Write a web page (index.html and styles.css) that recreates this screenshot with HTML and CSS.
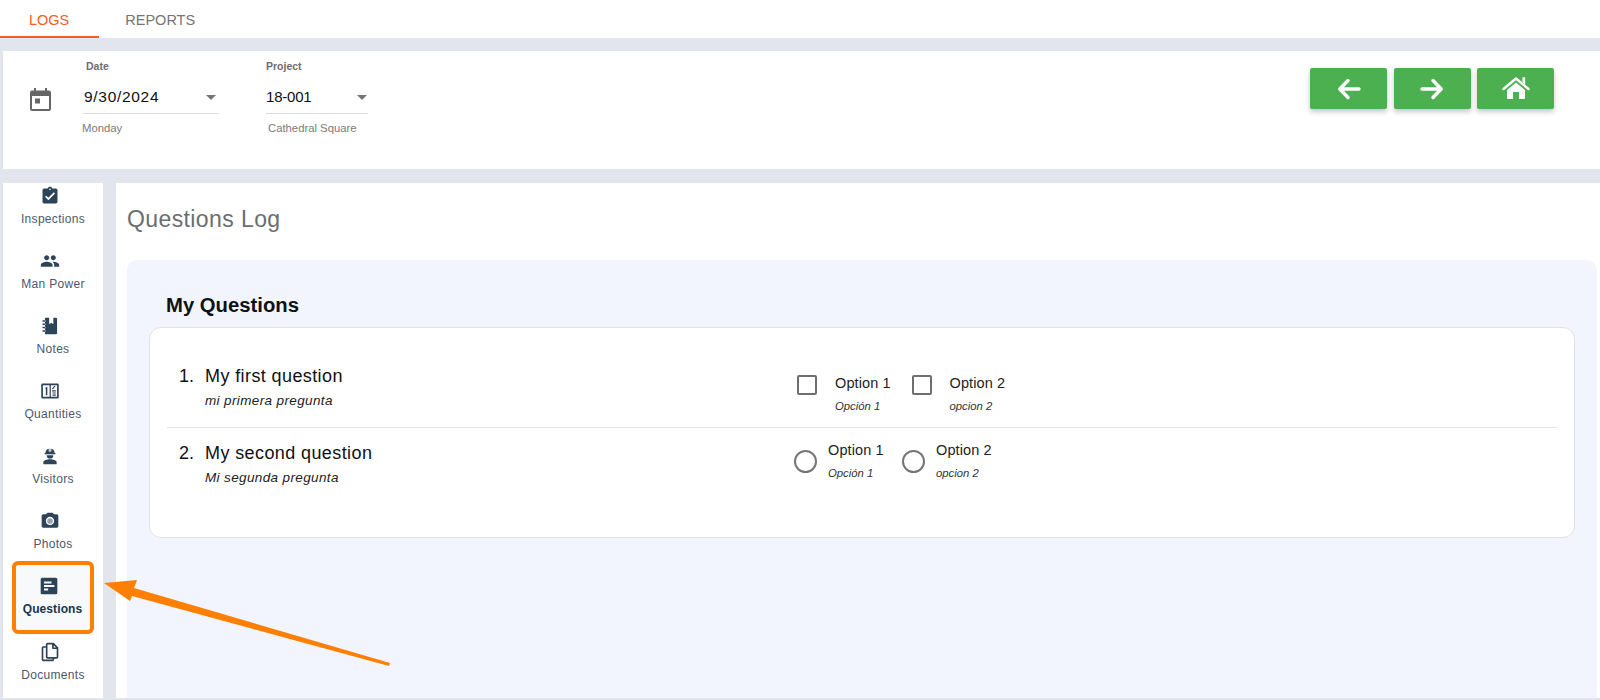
FILE: index.html
```html
<!DOCTYPE html>
<html lang="en">
<head>
<meta charset="utf-8">
<title>Questions Log</title>
<link rel="stylesheet" href="styles.css">
</head>
<body>
<nav class="tabs">
  <a class="tab tab-active">LOGS</a>
  <a class="tab">REPORTS</a>
</nav>
<header class="toolbar">
  <svg class="cal-icon" viewBox="0 0 21 23"><path fill="#666" fill-rule="evenodd" d="M4 0h2v2.500h9V0h2v2.500h2a2 2 0 0 1 2 2V21a2 2 0 0 1-2 2H2a2 2 0 0 1-2-2V4.500a2 2 0 0 1 2-2h2zM2 8v13h17V8zM5 10.500h5v5H5z"/></svg>
  <div class="field field-date">
    <div class="field-label">Date</div>
    <div class="field-value"><span>9/30/2024</span><i class="caret"></i></div>
    <div class="field-hint">Monday</div>
  </div>
  <div class="field field-project">
    <div class="field-label">Project</div>
    <div class="field-value"><span>18-001</span><i class="caret"></i></div>
    <div class="field-hint hint-indent">Cathedral Square</div>
  </div>
  <div class="actions">
    <button class="btn"><svg viewBox="0 0 24 24" class="btn-icon"><path d="M22 12H3M11 3.500 2.800 12l8.200 8.500" fill="none" stroke="#fff" stroke-width="3.400" stroke-linecap="round" stroke-linejoin="round"/></svg></button>
    <button class="btn"><svg viewBox="0 0 24 24" class="btn-icon"><path d="M2 12h19M13 3.500l8.200 8.500-8.200 8.500" fill="none" stroke="#fff" stroke-width="3.400" stroke-linecap="round" stroke-linejoin="round"/></svg></button>
    <button class="btn"><svg viewBox="0 0 28 24" class="btn-icon home-icon"><path fill="#fff" d="M14 7.500 5 15v8a1 1 0 0 0 1 1h5v-7h6v7h5a1 1 0 0 0 1-1v-8z"/><path fill="none" stroke="#fff" stroke-width="2.400" stroke-linecap="round" stroke-linejoin="round" d="M1.500 14 14 3.500 26.500 14"/><path fill="#fff" d="M20.500 2.300h2.700v7.200l-2.700-2.300z"/></svg></button>
  </div>
</header>
<div class="content">
  <aside class="sidebar">
    <div class="side-item side-first">
      <svg class="side-icon" viewBox="0 0 24 24"><path d="M19 3h-4.180C14.400 1.840 13.300 1 12 1c-1.300 0-2.400.84-2.820 2H5c-1.100 0-2 .9-2 2v14c0 1.100.9 2 2 2h14c1.100 0 2-.9 2-2V5c0-1.100-.9-2-2-2zm-7 0c.55 0 1 .45 1 1s-.45 1-1 1-1-.45-1-1 .45-1 1-1zm-2 14l-4-4 1.410-1.410L10 14.170l6.590-6.590L18 9l-8 8z"/></svg>
      <span>Inspections</span>
    </div>
    <div class="side-item">
      <svg class="side-icon" viewBox="0 0 24 24"><path d="M16 11c1.660 0 2.990-1.340 2.990-3S17.660 5 16 5c-1.660 0-3 1.340-3 3s1.340 3 3 3zm-8 0c1.660 0 2.990-1.340 2.990-3S9.660 5 8 5C6.340 5 5 6.340 5 8s1.340 3 3 3zm0 2c-2.330 0-7 1.170-7 3.500V19h14v-2.500c0-2.330-4.670-3.500-7-3.500zm8 0c-.29 0-.62.02-.97.05 1.160.84 1.970 1.970 1.970 3.450V19h6v-2.500c0-2.330-4.670-3.500-7-3.500z"/></svg>
      <span>Man Power</span>
    </div>
    <div class="side-item">
      <svg class="side-icon" viewBox="0 0 24 24"><path fill-rule="evenodd" d="M6 2h5v8l2.500-2 2.500 2V2h3a1.500 1.500 0 0 1 1.500 1.500v17A1.500 1.500 0 0 1 19 22H6zM3 5h3.500v1.800H3zM3 9h3.500v1.800H3zM3 13h3.500v1.800H3zM3 17h3.500v1.800H3z"/></svg>
      <span>Notes</span>
    </div>
    <div class="side-item">
      <svg class="side-icon" viewBox="0 0 24 24"><path fill-rule="evenodd" d="M3 3h18a1.500 1.500 0 0 1 1.500 1.500v15A1.500 1.500 0 0 1 21 21H3a1.500 1.500 0 0 1-1.500-1.500v-15A1.500 1.500 0 0 1 3 3zM3.500 5v14h8V5zM13 5v14h7.500V5zM6.500 8 8.800 6.800V17H7V9.200l-.5.300zM14.500 11h4.500v1.500h-4.500zM17.200 5.800l1.300.5-3 3.900-1.200-.5zM15 13.800h4v1.300h-4zM15 16.300h4v1.300h-4z"/></svg>
      <span>Quantities</span>
    </div>
    <div class="side-item">
      <svg class="side-icon" viewBox="0 0 24 24"><path d="M6.500 8.500a5.500 5.500 0 0 1 4-5.200V7h1.200V3h.6v4h1.200V3.300a5.500 5.500 0 0 1 4 5.200h1v1.300H5.500V8.500zM8 11h8a4 4 0 0 1-8 0zM12 16c3.500 0 8 1.500 8 3.600V22H4v-2.400C4 17.500 8.500 16 12 16z"/></svg>
      <span>Visitors</span>
    </div>
    <div class="side-item">
      <svg class="side-icon" viewBox="0 0 24 24"><path d="M9 2L7.170 4H4c-1.100 0-2 .9-2 2v12c0 1.100.9 2 2 2h16c1.100 0 2-.9 2-2V6c0-1.100-.9-2-2-2h-3.170L15 2H9zm3 15c-2.760 0-5-2.240-5-5s2.240-5 5-5 5 2.240 5 5-2.240 5-5 5z"/><circle cx="12" cy="12" r="3.400" fill="#9aa3ad"/></svg>
      <span>Photos</span>
    </div>
    <div class="side-item side-active">
      <svg class="side-icon" viewBox="0 0 24 24"><path fill-rule="evenodd" d="M4 2h16a2 2 0 0 1 2 2v16a2 2 0 0 1-2 2H4a2 2 0 0 1-2-2V4a2 2 0 0 1 2-2zM6 6.500v2.500h9V6.500zM6 10.800v2.400h12.500v-2.400zM6 15v2.500h5V15z"/></svg>
      <span>Questions</span>
    </div>
    <div class="side-item">
      <svg class="side-icon" viewBox="0 0 24 24"><path fill="none" stroke="#2d4358" stroke-width="2" stroke-linejoin="round" d="M9 2h7l5 5v11a1 1 0 0 1-1 1H9a1 1 0 0 1-1-1V3a1 1 0 0 1 1-1zM15.500 2v5.500H21M8 6H4a1 1 0 0 0-1 1v14a1 1 0 0 0 1 1h11a1 1 0 0 0 1-1v-2"/></svg>
      <span>Documents</span>
    </div>
  </aside>
  <main class="main">
    <h1 class="page-title">Questions Log</h1>
    <section class="panel">
      <h2 class="panel-title">My Questions</h2>
      <div class="card">
        <div class="row row-first">
          <div class="question">
            <div class="q-title"><span class="q-num">1.</span>My first question</div>
            <div class="q-sub">mi primera pregunta</div>
          </div>
          <div class="opts opts-check">
            <div class="opt opt-check"><i class="check"></i><div><div class="opt-text">Option 1</div><div class="opt-sub">Opción 1</div></div></div>
            <div class="opt opt-check"><i class="check"></i><div><div class="opt-text">Option 2</div><div class="opt-sub">opcion 2</div></div></div>
          </div>
        </div>
        <div class="row row-second">
          <div class="question">
            <div class="q-title"><span class="q-num">2.</span>My second question</div>
            <div class="q-sub">Mi segunda pregunta</div>
          </div>
          <div class="opts opts-radio">
            <div class="opt opt-radio"><i class="radio"></i><div><div class="opt-text">Option 1</div><div class="opt-sub">Opción 1</div></div></div>
            <div class="opt opt-radio"><i class="radio"></i><div><div class="opt-text">Option 2</div><div class="opt-sub">opcion 2</div></div></div>
          </div>
        </div>
      </div>
    </section>
  </main>
</div>
<svg class="arrow" viewBox="0 0 1600 700" width="1600" height="700"><path fill="#ff8000" d="M104 583 137 580 134 588 390 663 389 666 132 596 130 601z"/></svg>
</body>
</html>
```
FILE: styles.css
```css
* { box-sizing: border-box; }
html, body { margin: 0; height: 700px; overflow: hidden; }
body {
  position: relative;
  background: #e2e5ed;
  font-family: "Liberation Sans", Arial, sans-serif;
  color: #111;
  display: flex;
  flex-direction: column;
}
.tabs { height: 38px; background: #fff; display: flex; flex: none; }
.tab {
  height: 38px;
  padding: 0 30px 0 29px;
  line-height: 40px;
  font-size: 14.500px;
  color: #757575;
}
.tab + .tab { margin-left: -3px; }
.tab-active { color: #ff5a24; border-bottom: 2px solid #ff5a24; }

.toolbar {
  flex: none;
  height: 118px;
  margin: 13px 0 14px 3px;
  background: #fff;
  display: flex;
  position: relative;
}
.cal-icon { width: 21px; height: 23px; margin: 37px 0 0 27px; flex: none; }
.field { display: flex; flex-direction: column; flex: none; }
.field-date { width: 136px; margin-left: 32px; }
.field-project { width: 102px; margin-left: 47px; }
.field-label { font-size: 10.500px; font-weight: bold; color: #6d6d6d; margin: 9px 0 0 3px; height: 13px; line-height: 13px; }
.field-project .field-label { margin-left: 0; }
.field-value {
  margin-top: 14px;
  height: 27px;
  border-bottom: 1px solid #dcdcdc;
  display: flex;
  justify-content: space-between;
  font-size: 15.500px;
  line-height: 20px;
  color: #111;
  padding: 0 3px 0 1px;
}
.field-date .field-value { letter-spacing: .7px; }
.field-project .field-value { padding: 0 1px 0 0; font-size: 15px; letter-spacing: -.2px; }
.caret { border: 5.500px solid transparent; border-top: 5.500px solid #757575; border-bottom: 0; margin-top: 8px; width: 0; height: 0; }
.field-hint { font-size: 11.300px; color: #7b7b7b; margin: 7px 0 0 -1px; line-height: 14px; }
.hint-indent { margin-left: 2px; white-space: nowrap; }
.actions { margin-left: auto; margin-right: 46px; margin-top: 17px; display: flex; gap: 6.500px; }
.btn {
  width: 77px;
  height: 41px;
  background: #4caf50;
  border: 0;
  border-radius: 2px;
  padding: 0;
  display: flex;
  align-items: center;
  justify-content: center;
  box-shadow: 0 3px 5px rgba(0, 0, 0, .22);
}
.btn-icon { width: 24px; height: 24px; display: block; }
.home-icon { width: 28px; height: 24px; margin-top: -3px; }

.content { flex: 1; display: flex; gap: 13px; margin: 0 0 2px 3px; min-height: 0; }
.sidebar { width: 100px; background: #fff; overflow: hidden; flex: none; display: flex; flex-direction: column; align-items: center; }
.side-item {
  width: 100%;
  height: 65px;
  flex: none;
  display: flex;
  flex-direction: column;
  align-items: center;
  padding-top: 1px;
  font-size: 12px;
  color: #4a5a6b;
}
.side-item span { margin-top: 6px; line-height: 14px; letter-spacing: .3px; }
.side-first { margin-top: 1.500px; }
.side-icon { width: 20px; height: 20px; fill: #2d4358; display: block; flex: none; margin-right: 6px; }
.side-active {
  width: 82px;
  height: 73px;
  margin: -13.500px 0 7px -1px;
  padding-top: 11px;
  border: 4px solid #ff8000;
  border-radius: 6px;
  background: #f8f9fb;
  color: #20344a;
  font-weight: bold;
}
.side-active .side-icon { margin-right: 8px; }
.side-active span { margin-top: 6px; letter-spacing: .1px; }

.main { flex: 1; background: #fff; padding: 0 3px 0 11px; display: flex; flex-direction: column; min-width: 0; }
.page-title { font-size: 23px; letter-spacing: .4px; font-weight: normal; color: #6a6e72; margin: 24px 0 0; line-height: 24px; height: 53px; }
.panel { flex: 1; background: #f2f5fd; border-radius: 10px 10px 0 0; padding: 0 22px 0 22px; }
.panel-title { font-size: 20.300px; font-weight: bold; color: #111; margin: 34px 0 0 17px; line-height: 22px; height: 33px; }
.card { height: 211px; background: #fff; border: 1px solid #e1e2e5; border-radius: 12px; padding: 0 17px; }
.row { display: flex; }
.row-first { height: 100px; border-bottom: 1px solid #e4e4e4; padding-top: 37px; }
.row-second { padding-top: 14px; }
.question { width: 630px; padding-left: 12px; flex: none; }
.q-title { font-size: 18px; letter-spacing: .4px; line-height: 22px; color: #111; }
.q-num { display: inline-block; width: 26px; letter-spacing: 0; }
.q-sub { font-size: 13.500px; font-style: italic; color: #222; margin: 6px 0 0 26px; line-height: 16px; letter-spacing: .37px; }
.opts { display: flex; }
.opt { display: flex; flex: none; }
.opt-text { font-size: 14.500px; line-height: 18px; color: #222; letter-spacing: .1px; }
.opt-sub { font-size: 11.300px; font-style: italic; color: #333; line-height: 14px; margin-top: 7px; }
.opts-check { margin-top: 9px; }
.opt-check { width: 114.500px; }
.check { width: 20px; height: 20px; border: 2px solid #6e6e6e; border-radius: 2px; margin: 1px 18px 0 0; flex: none; }
.opts-radio { margin-left: -3px; margin-top: -1px; }
.opt-radio { width: 108px; }
.radio { width: 23px; height: 23px; border: 2px solid #757575; border-radius: 50%; margin: 9px 11px 0 0; flex: none; }

.arrow { position: absolute; left: 0; top: 0; pointer-events: none; }
```
